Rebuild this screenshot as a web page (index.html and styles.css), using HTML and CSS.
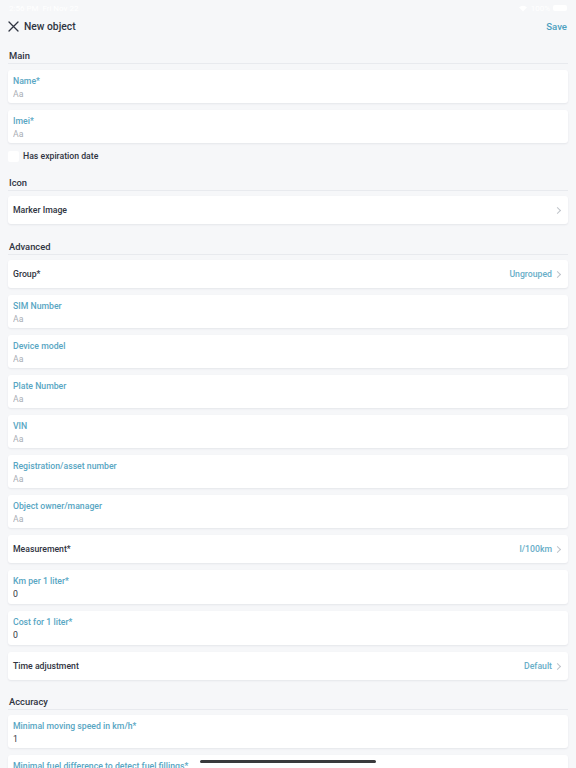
FILE: index.html
```html
<!DOCTYPE html>
<html lang="en">
<head>
  <meta charset="UTF-8" />
  <meta name="viewport" content="width=device-width, initial-scale=1.0" />
  <title>New object</title>
  <link rel="stylesheet" href="styles.css">
</head>
<body>
  <div class="statusbar">
    <span>2:56 PM&nbsp;&nbsp;Fri Nov 22</span>
    <span class="status-right">
      <svg width="10" height="8" viewBox="0 0 10 8"><path d="M5 7.5 L1 3.2 A6 6 0 0 1 9 3.2 Z" fill="#fff"/></svg>
      100%
      <span class="battery"></span>
    </span>
  </div>

  <header class="topbar">
    <div class="title">
      <svg class="close-icon" width="11" height="11" viewBox="0 0 11 11">
        <path d="M1 1 L10 10 M10 1 L1 10" stroke="#2f3441" stroke-width="1.3" stroke-linecap="round"/>
      </svg>
      <span>New object</span>
    </div>
    <a class="save" href="#">Save</a>
  </header>

  <form class="object-form">
    <div class="section-title first">Main</div>
    <div class="field">
      <label>Name*</label>
      <input type="text" placeholder="Aa" />
    </div>
    <div class="field">
      <label>Imei*</label>
      <input type="text" placeholder="Aa" />
    </div>
    <label class="check-row">
      <span class="checkbox"></span>
      Has expiration date
    </label>

    <div class="section-title">Icon</div>
    <div class="row">
      <span class="row-label">Marker Image</span>
      <span class="row-value"><span class="chevron"></span></span>
    </div>

    <div class="section-title">Advanced</div>
    <div class="row">
      <span class="row-label">Group*</span>
      <span class="row-value">Ungrouped <span class="chevron"></span></span>
    </div>
    <div class="field">
      <label>SIM Number</label>
      <input type="text" placeholder="Aa" />
    </div>
    <div class="field">
      <label>Device model</label>
      <input type="text" placeholder="Aa" />
    </div>
    <div class="field">
      <label>Plate Number</label>
      <input type="text" placeholder="Aa" />
    </div>
    <div class="field">
      <label>VIN</label>
      <input type="text" placeholder="Aa" />
    </div>
    <div class="field">
      <label>Registration/asset number</label>
      <input type="text" placeholder="Aa" />
    </div>
    <div class="field">
      <label>Object owner/manager</label>
      <input type="text" placeholder="Aa" />
    </div>
    <div class="row">
      <span class="row-label">Measurement*</span>
      <span class="row-value">l/100km <span class="chevron"></span></span>
    </div>
    <div class="field tall">
      <label>Km per 1 liter*</label>
      <input type="text" value="0" />
    </div>
    <div class="field tall">
      <label>Cost for 1 liter*</label>
      <input type="text" value="0" />
    </div>
    <div class="row">
      <span class="row-label">Time adjustment</span>
      <span class="row-value">Default <span class="chevron"></span></span>
    </div>

    <div class="section-title accuracy">Accuracy</div>
    <div class="field">
      <label>Minimal moving speed in km/h*</label>
      <input type="text" value="1" />
    </div>
    <div class="field">
      <label>Minimal fuel difference to detect fuel fillings*</label>
      <input type="text" value="10" />
    </div>
  </form>

  <div class="home-indicator"></div>
</body>
</html>
```

FILE: styles.css
```css
* { box-sizing: border-box; }
html, body { height: 100%; overflow: hidden; }
body {
  margin: 0; padding: 0 8px;
  background: #f6f7f9;
  font-family: Roboto, 'Open Sans', sans-serif;
  color: #2f3441;
}

.statusbar {
  height: 14px; padding: 2px 1px 0;
  display: flex; justify-content: space-between; align-items: center;
  font-size: 8px; color: #ffffff;
}
.status-right { display: flex; align-items: center; gap: 3px; }
.battery { width: 14px; height: 6px; background: #fff; border-radius: 2px; }

.topbar {
  height: 24px;
  display: flex; justify-content: space-between; align-items: center;
}
.title { display: flex; align-items: center; gap: 5px; font-size: 10.3px; font-weight: 500; }
.close-icon { display: block; }
.save { color: #4d9fbf; font-size: 9.6px; font-weight: 500; text-decoration: none; padding-right: 1px; }

.object-form { display: flex; flex-direction: column; gap: 7px; }

.section-title {
  font-size: 9.4px; font-weight: 500; line-height: 16px; height: 16px;
  padding-left: 1px; margin-top: 8px; margin-bottom: -2px;
  border-bottom: 1px solid #e8eaee;
}
.section-title.first { margin-top: 10px; margin-bottom: -1px; }
.section-title.accuracy { margin-top: 7px; }

.field, .row {
  background: #ffffff; border-radius: 3px;
  box-shadow: 0 1px 2px rgba(30, 40, 60, 0.08);
}
.field { height: 33px; padding: 5px 5px 2px; display: flex; flex-direction: column; }
.field.tall { height: 34px; }
.field label {
  font-size: 8.7px; font-weight: 500; line-height: 13px; color: #58a6c3;
  white-space: nowrap;
}
.field input {
  border: none; outline: none; padding: 0; margin: 0; background: transparent;
  font-family: inherit; font-size: 8.7px; line-height: 13px; height: 13px;
  color: #2f3441;
}
.field input::placeholder { color: #a9adb5; }

.row {
  height: 28px; padding: 0 6px 0 5px;
  display: flex; justify-content: space-between; align-items: center;
}
.row-label { font-size: 8.7px; font-weight: 500; }
.row-value { display: flex; align-items: center; gap: 3px; font-size: 8.7px; font-weight: 500; color: #68aec8; }
.chevron {
  width: 5px; height: 5px; margin-right: 2px;
  border-top: 1px solid #bfc3c9; border-right: 1px solid #bfc3c9;
  transform: rotate(45deg);
}

.check-row {
  display: flex; align-items: center; gap: 4px; height: 12px; margin-bottom: -2px;
  font-size: 8.7px; font-weight: 500;
}
.checkbox { width: 11px; height: 11px; background: #ffffff; border-radius: 2px; }

.home-indicator {
  position: fixed; left: 200px; bottom: 5px;
  width: 176px; height: 3px; border-radius: 2px; background: #3a3a3c;
}
```
